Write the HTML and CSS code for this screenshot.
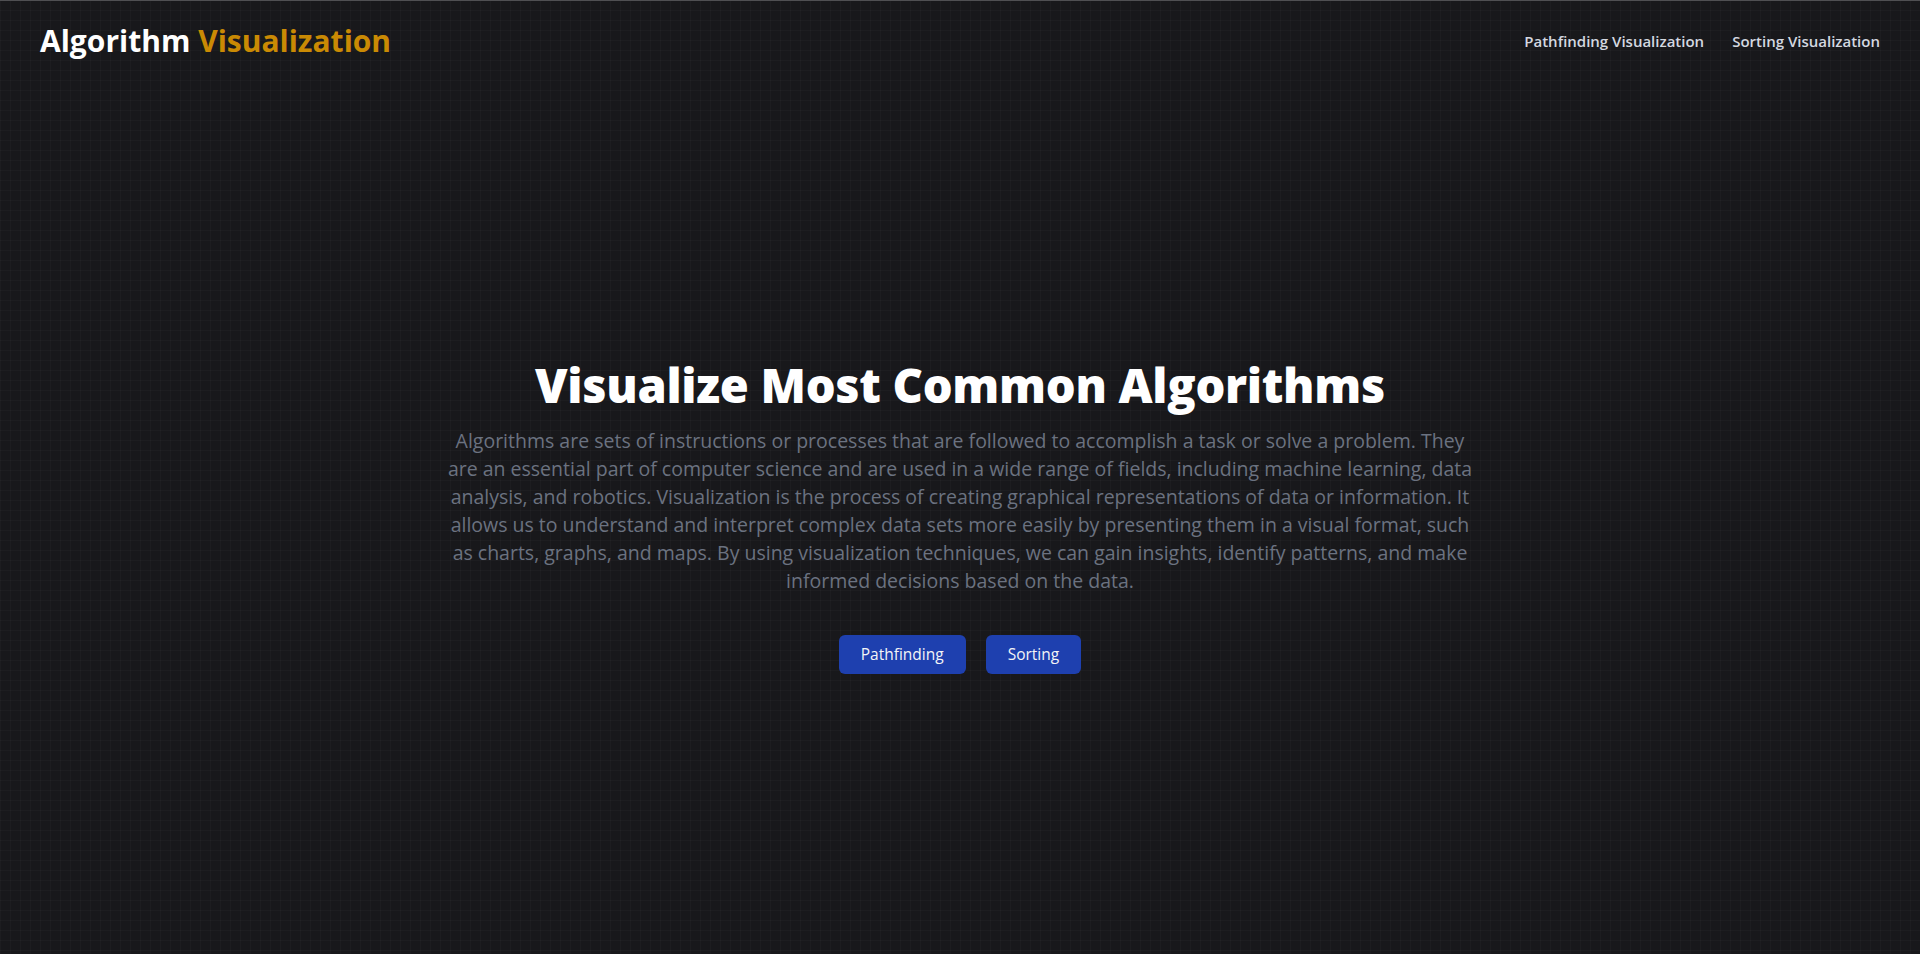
FILE: index.html
```html
<!DOCTYPE html>
<html lang="en">
<head>
<meta charset="utf-8">
<title>Algorithm Visualization</title>
<link rel="stylesheet" href="styles.css">
</head>
<body>
<div class="page">
  <header class="header">
    <a class="brand" href="#">Algorithm <span class="brand-accent">Visualization</span></a>
    <nav class="nav">
      <a class="nav-link" href="#">Pathfinding Visualization</a>
      <a class="nav-link" href="#">Sorting Visualization</a>
    </nav>
  </header>
  <main class="hero">
    <h1 class="hero-title">Visualize Most Common Algorithms</h1>
    <p class="hero-text">Algorithms are sets of instructions or processes that are followed to accomplish a task or solve a problem. They<br>are an essential part of computer science and are used in a wide range of fields, including machine learning, data<br>analysis, and robotics. Visualization is the process of creating graphical representations of data or information. It<br>allows us to understand and interpret complex data sets more easily by presenting them in a visual format, such<br>as charts, graphs, and maps. By using visualization techniques, we can gain insights, identify patterns, and make<br>informed decisions based on the data.</p>
    <div class="actions">
      <a class="btn" href="#">Pathfinding</a>
      <a class="btn" href="#">Sorting</a>
    </div>
  </main>
</div>
</body>
</html>
```
FILE: styles.css
```css
* { box-sizing: border-box; }
html, body { margin: 0; padding: 0; height: 100%; }
body {
  font-family: "Open Sans", "Noto Sans", sans-serif;
  background-color: #18181b;
  background-image:
    linear-gradient(rgba(255,255,255,0.025) 1px, transparent 1px),
    linear-gradient(90deg, rgba(255,255,255,0.025) 1px, transparent 1px);
  background-size: 10px 10px;
  color: #fff;
  border-top: 1px solid #4f4f52;
}
a { text-decoration: none; color: inherit; }
.page {
  height: calc(100vh - 1px);
  display: flex;
  flex-direction: column;
}
.header {
  height: 79px;
  display: flex;
  align-items: center;
  justify-content: space-between;
  padding: 0 40px;
}
.brand {
  font-size: 30px;
  font-weight: 700;
  color: #ffffff;
  letter-spacing: 0;
}
.brand-accent { color: #ca8a04; }
.nav { display: flex; gap: 28px; }
.nav-link {
  font-size: 15px;
  font-weight: 600;
  color: #d4d8e0;
  letter-spacing: 0;
}
.hero {
  flex: 1;
  display: flex;
  flex-direction: column;
  align-items: center;
  justify-content: center;
  text-align: center;
}
.hero-title {
  margin: 0;
  font-size: 47px;
  line-height: 48px;
  font-weight: 800;
  letter-spacing: -0.3px;
}
.hero-text {
  margin: 18px 0 0;
  max-width: 1080px;
  font-size: 19.5px;
  line-height: 28px;
  color: #6b7280;
  letter-spacing: 0;
}
.actions {
  margin-top: 40px;
  display: flex;
  gap: 20px;
}
.btn {
  background: #1e40af;
  color: #f3f4f6;
  font-size: 15.5px;
  line-height: 23px;
  padding: 8px 22px;
  border-radius: 6px;
}
```
